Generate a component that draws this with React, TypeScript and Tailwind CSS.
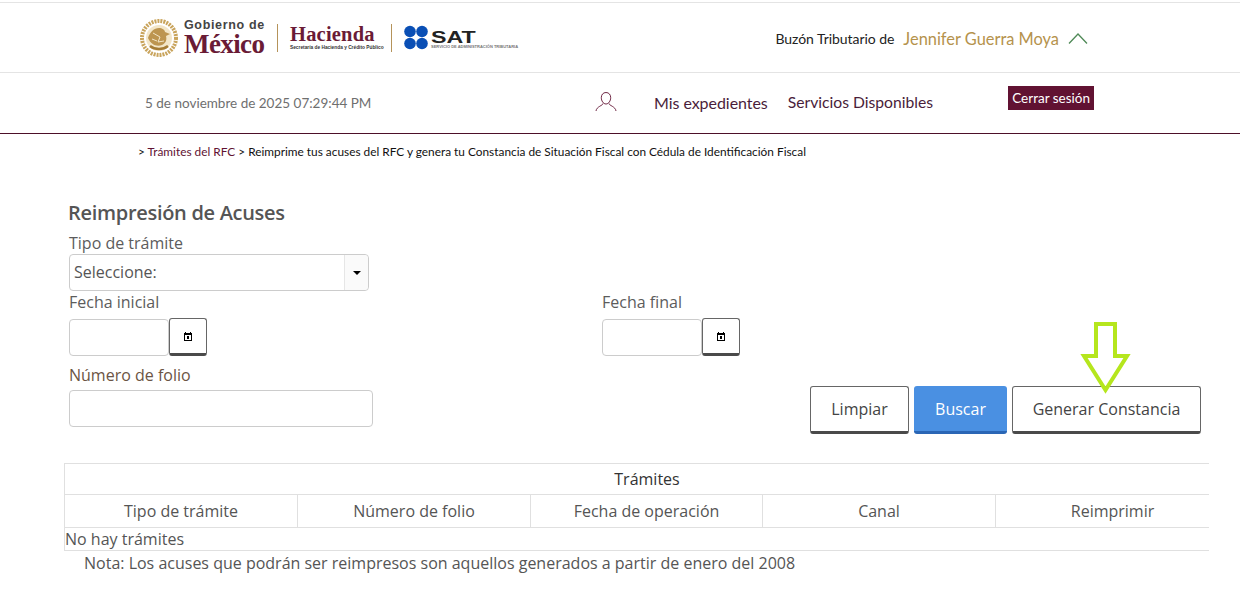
const headerFont = "[font-family:Lato,'Liberation_Sans',sans-serif]";

function Escudo() {
  // simplified gold seal of the Gobierno de México logo
  return (
    <svg width="38" height="40" viewBox="0 0 38 40" className="shrink-0">
      <circle cx="19" cy="20" r="17" fill="none" stroke="#c9a45c" strokeWidth="4" strokeDasharray="2 1" />
      <circle cx="19" cy="20" r="13" fill="#f3e6c8" />
      <path d="M8 20c2-6 6-10 11-10 3 0 6 2 6 4l5 2-4 2c1 4 0 7-4 9-5 2-11 0-14-7z" fill="#bd9550" />
      <path d="M10 28c5 4 13 4 18 0" fill="none" stroke="#a67c35" strokeWidth="2.5" />
      <path d="M13 15l7 4-2 5 6-1M12 21l5 2" fill="none" stroke="#f3e6c8" strokeWidth="1" />
    </svg>
  );
}

function SatDots() {
  return (
    <svg width="24" height="25" viewBox="0 0 24 25" className="shrink-0">
      <circle cx="6" cy="6.500" r="5.800" fill="#0a4fb5" />
      <circle cx="18" cy="6.500" r="5.800" fill="#0a4fb5" />
      <circle cx="6" cy="18.500" r="5.800" fill="#0a4fb5" />
      <circle cx="18" cy="18.500" r="5.800" fill="#0a4fb5" />
    </svg>
  );
}

function Logos() {
  return (
    <div className="flex items-center">
      <Escudo />
      <div className="ml-[6px] flex w-[82px] flex-col font-['Liberation_Serif',serif] leading-none">
        <span className="font-['Liberation_Sans',sans-serif] text-[12.500px] leading-[13px] font-bold tracking-[0.65px] whitespace-nowrap text-[#444]">
          Gobierno de
        </span>
        <span className="text-[27px] leading-[24px] font-bold tracking-[-0.6px] text-[#6a1b36]">México</span>
      </div>
      <div className="mr-[12px] ml-[11px] h-[28px] w-px bg-[#b5935a]" />
      <div className="flex w-[87px] flex-col">
        <span className="font-['Liberation_Serif',serif] text-[20.500px] leading-[20px] font-bold tracking-[0.2px] text-[#6a1b36]">
          Hacienda
        </span>
        <span className="font-['Liberation_Sans',sans-serif] text-[4.800px] leading-[7px] font-bold whitespace-nowrap text-[#333]">
          Secretaría de Hacienda y Crédito Público
        </span>
      </div>
      <div className="mr-[12px] ml-[14px] h-[28px] w-px bg-[#b5935a]" />
      <SatDots />
      <div className="ml-[3px] flex flex-col pt-[7px]">
        <span className="origin-left scale-x-[1.45] font-['Liberation_Sans',sans-serif] text-[16px] leading-[12px] font-bold text-[#222]">
          SAT
        </span>
        <span className="font-['Liberation_Sans',sans-serif] text-[4px] leading-[6px] font-bold whitespace-nowrap text-[#777]">
          SERVICIO DE ADMINISTRACIÓN TRIBUTARIA
        </span>
      </div>
    </div>
  );
}

function CalendarButton() {
  return (
    <button className="-mt-px flex h-[38px] w-[38px] items-center justify-center rounded-[3px] border border-b-[3px] border-[#666] border-b-[#4a4a4a] bg-white">
      <svg width="8" height="9" viewBox="0 0 8 9">
        <path d="M1.500 0v1.500M6.500 0v1.500" stroke="#000" strokeWidth="1" />
        <rect x="0.500" y="1.500" width="7" height="7" fill="none" stroke="#000" strokeWidth="1" />
        <rect x="0.500" y="1.500" width="7" height="1.500" fill="#000" />
        <rect x="3" y="4" width="2" height="3" fill="#000" />
      </svg>
    </button>
  );
}

function DateField({ label }: { label: string }) {
  return (
    <div>
      <div className="h-[29px] text-[16px] leading-[24px] text-[#5c5c5c]">{label}</div>
      <div className="flex">
        <input className="h-[37px] w-[100px] rounded-[4px] border border-[#ccc] bg-white" />
        <CalendarButton />
      </div>
    </div>
  );
}

const columns = [
  { title: 'Tipo de trámite', width: 'w-[233px]' },
  { title: 'Número de folio', width: 'w-[233px]' },
  { title: 'Fecha de operación', width: 'w-[232px]' },
  { title: 'Canal', width: 'w-[233px]' },
  { title: 'Reimprimir', width: 'w-[233px]' },
];

export default function App() {
  return (
    <div className="relative min-h-[595px] bg-white font-['Open_Sans',sans-serif]">
      {/* Header */}
      <header className="mt-[2px] flex h-[71px] items-center justify-between border-y border-[#e4e4e4] pr-[152px] pl-[140px]">
        <Logos />
        <div className={`flex items-center pt-[3px] ${headerFont}`}>
          <span className="text-[14px] tracking-[-0.05px] text-[#222]">Buzón Tributario de</span>
          <span className="ml-[9px] text-[16.400px] text-[#b5924c]">Jennifer Guerra Moya</span>
          <svg width="20" height="11" viewBox="0 0 20 11" fill="none" stroke="#4f8a57" strokeWidth="1.300" className="ml-[9px]">
            <path d="M1 10.500L10 1l9 9.500" />
          </svg>
        </div>
      </header>

      {/* Nav */}
      <nav className={`flex h-[61px] items-start border-b border-[#4d1029] pt-[13px] ${headerFont}`}>
        <span className="mt-[7px] ml-[145px] w-[440px] text-[13.500px] text-[#6f6f6f]">5 de noviembre de 2025 07:29:44 PM</span>
        <svg width="22" height="22" viewBox="0 0 22 22" className="mt-[5px] ml-[10px]" fill="none" stroke="#611232" strokeWidth="0.900">
          <path d="M11 1.500c3 0 4.700 2.300 4.700 5.200 0 3-2 6.300-4.700 6.300s-4.700-3.300-4.700-6.300c0-2.900 1.700-5.200 4.700-5.200z" />
          <path d="M8 12.500c0 2-6.500 3-7 7.500M14 12.500c0 2 6.500 3 7 7.500" />
        </svg>
        <span className="mt-[5px] ml-[37px] text-[16px] tracking-[-0.05px] text-[#4a1d3a]">Mis expedientes</span>
        <span className="mt-[5px] ml-[20px] text-[15.700px] text-[#4a1d3a]">Servicios Disponibles</span>
        <button className="ml-[75px] h-[24px] w-[86px] bg-[#611232] text-[13.500px] text-white">Cerrar sesión</button>
      </nav>

      {/* Breadcrumb */}
      <div className={`mt-[9px] ml-[138px] text-[11.850px] leading-[18px] text-[#111] ${headerFont}`}>
        &gt; <span className="text-[#611232]">Trámites del RFC</span> &gt; Reimprime tus acuses del RFC y genera tu Constancia de Situación Fiscal con Cédula de Identificación Fiscal
      </div>

      {/* Form */}
      <main className="mt-[36px]">
        <div className="pr-[39px] pl-[69px]">
          <h1 className="-ml-px h-[34px] text-[20px] leading-[32px] font-semibold tracking-[-0.3px] text-[#555]">Reimpresión de Acuses</h1>
          <div className="h-[23px] text-[16px] leading-[24px] text-[#5c5c5c]">Tipo de trámite</div>
          <div className="flex h-[37px] w-[300px] items-center rounded-[4px] border border-[#ccc]">
            <span className="flex-1 pb-[2px] pl-[4px] text-[16px] text-[#555]">Seleccione:</span>
            <span className="flex h-full w-[24px] items-center justify-center rounded-r-[4px] border-l border-[#e6e6e6] bg-[#fafafa]">
              <span className="h-0 w-0 border-x-[4px] border-t-[4px] border-x-transparent border-t-black" />
            </span>
          </div>
          <div className="-mt-px flex">
            <div className="w-[533px]">
              <DateField label="Fecha inicial" />
            </div>
            <DateField label="Fecha final" />
          </div>
          <div className="mt-[5px] flex items-start justify-between">
            <div>
              <div className="h-[29px] text-[16px] leading-[28px] text-[#6b5444]">Número de folio</div>
              <input className="h-[37px] w-[304px] rounded-[4px] border border-[#ccc] bg-white" />
            </div>
            <div className="mt-[25px] flex gap-[5px]">
              <button className="h-[48px] w-[99px] rounded-[3px] border border-b-[3px] border-[#666] border-b-[#4a4a4a] bg-white text-[16px] text-[#444]">Limpiar</button>
              <button className="h-[48px] w-[93px] rounded-[3px] border-b-[3px] border-[#2a66b5] bg-[#4a90e2] text-[16px] text-white">Buscar</button>
              <button className="h-[48px] w-[189px] rounded-[3px] border border-b-[3px] border-[#666] border-b-[#4a4a4a] bg-white text-[16px] text-[#444]">Generar Constancia</button>
            </div>
          </div>
        </div>

        {/* Table runs wider than its box and is cut off at the right */}
        <div className="mt-[29px] ml-[64px] w-[1145px] overflow-hidden border-b border-l border-[#e0e0e0] text-[16px] text-[#555]">
          <div className="w-[1164px]">
            <div className="h-[32px] border-t border-b border-[#e0e0e0] text-center leading-[30px] text-[#333]">Trámites</div>
            <div className="flex h-[33px] border-b border-[#e0e0e0]">
              {columns.map((col) => (
                <div key={col.title} className={`${col.width} border-r border-[#e0e0e0] text-center leading-[32px] last:border-r-0`}>
                  {col.title}
                </div>
              ))}
            </div>
            <div className="h-[22px] leading-[23px]">No hay trámites</div>
          </div>
        </div>
        <p className="ml-[84px] text-[16px] leading-[24px] text-[#555]">
          Nota: Los acuses que podrán ser reimpresos son aquellos generados a partir de enero del 2008
        </p>
      </main>

      {/* Annotation arrow over the button */}
      <svg width="52" height="74" viewBox="0 0 52 74" className="absolute top-[318px] left-[1080px]">
        <path d="M16 4h19v32h12L25.500 70 4 36h12z" fill="none" stroke="#b5e61d" strokeWidth="4" />
      </svg>
    </div>
  );
}
